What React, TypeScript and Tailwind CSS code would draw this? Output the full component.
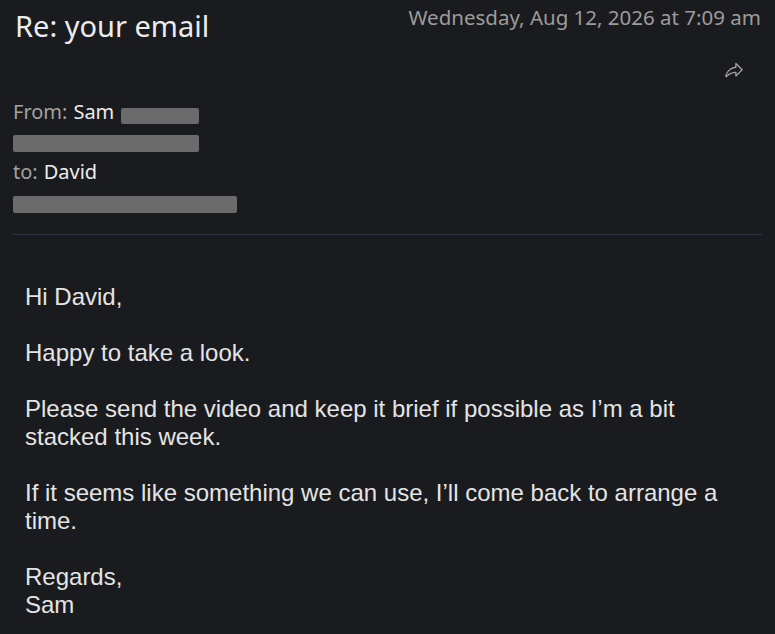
import { PiShareFat } from "react-icons/pi";

const paragraphs = [
  ["Hi David,"],
  ["Happy to take a look."],
  ["Please send the video and keep it brief if possible as I’m a bit stacked this week."],
  ["If it seems like something we can use, I’ll come back to arrange a time."],
  ["Regards,", "Sam"],
];

function Redacted({ className }: { className: string }) {
  return <span className={`inline-block rounded-[2px] bg-[#6b6b6b] ${className}`} />;
}

export default function App() {
  return (
    <div className="min-h-screen bg-[#1a1b1e] px-[13px] pb-6 [font-family:'Noto_Sans',sans-serif]">
      <div className="flex items-start justify-between">
        <h1 className="pl-[2px] pt-[8px] text-[29px] leading-[36px] text-[#ececec]">Re: your email</h1>
        <p className="pr-[1px] pt-[3px] text-[20.5px] leading-[28px] text-[#9c9c9c]">Wednesday, Aug 12, 2026 at 7:09 am</p>
      </div>

      <div className="mt-[17px] flex justify-end pr-[18px]">
        <PiShareFat className="h-[20px] w-[20px] text-[#a5a5a5]" />
      </div>

      <div className="mt-[16px] flex flex-col text-[20px] leading-[30px]">
        <div className="flex items-center">
          <span className="text-[#a3a3a3]">From:</span>
          <span className="ml-[6px] text-[#ececec]">Sam</span>
          <Redacted className="ml-[7px] mt-[8px] h-[16px] w-[78px]" />
        </div>
        <Redacted className="mt-[8px] h-[17px] w-[186px]" />
        <div className="mt-[5px] flex items-center">
          <span className="text-[#a3a3a3]">to:</span>
          <span className="ml-[6px] text-[#ececec]">David</span>
        </div>
        <Redacted className="mt-[9px] h-[17px] w-[224px]" />
      </div>

      <div className="mt-[21px] h-px bg-[#2e3142]" />

      <div className="mt-[48px] flex max-w-[737px] flex-col gap-[28px] pl-[12px] [font-family:'Liberation_Sans',Arial,sans-serif] text-[24px] leading-[28px] text-[#e4e4e4]">
        {paragraphs.map((lines, i) => (
          <p key={i}>
            {lines.map((line, j) => (
              <span key={j} className="block">
                {line}
              </span>
            ))}
          </p>
        ))}
      </div>
    </div>
  );
}
